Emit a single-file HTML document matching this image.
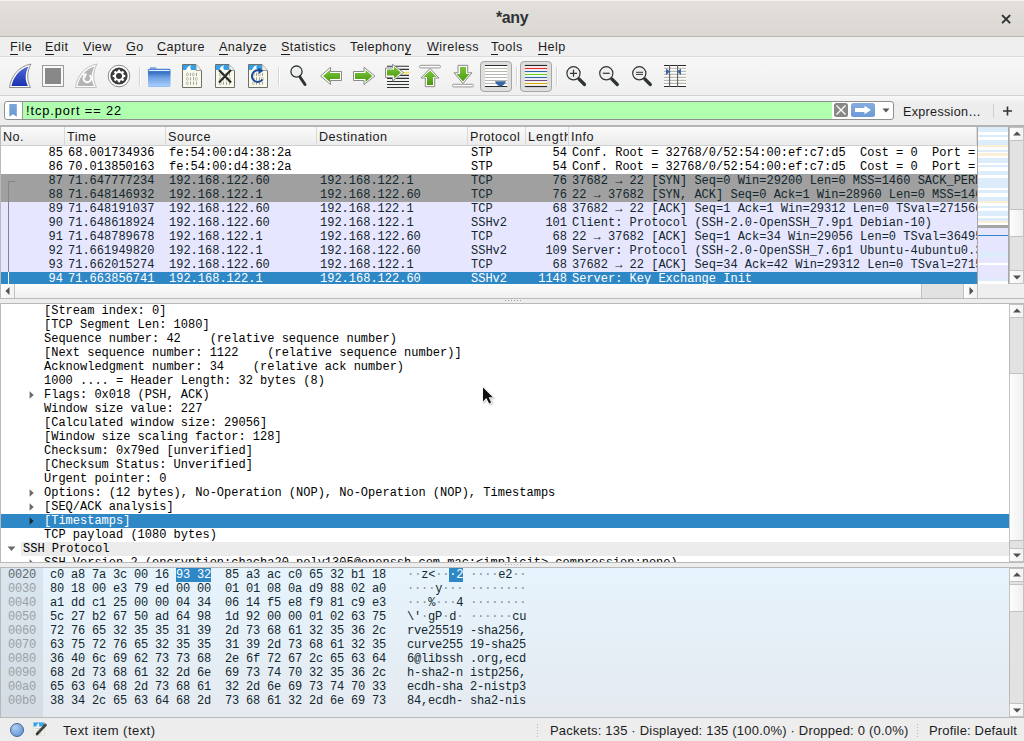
<!DOCTYPE html>
<html><head><meta charset="utf-8"><style>
*{box-sizing:border-box;margin:0;padding:0}
html,body{width:1024px;height:741px;overflow:hidden;background:#ededed;font-family:"Liberation Sans",sans-serif;color:#000}
.a{position:absolute}
.m{font-family:"Liberation Mono",monospace;font-size:12px;white-space:pre;line-height:14px}
#title{left:0;top:0;width:1024px;height:37px;background:linear-gradient(#e3e0dc,#dbd7d3);border-top:1px solid #f4f2f0;border-bottom:1px solid #bcb5ae}
#menu{left:0;top:37px;width:1024px;height:20px;background:#efefef;border-bottom:1px solid #dcdcdc}
#menu span{position:absolute;top:2px;font-size:12.6px;line-height:16px;color:#1c1c1c;letter-spacing:0.45px}
#menu u{text-decoration:none;border-bottom:1px solid #1c1c1c}
#tool{left:0;top:57px;width:1024px;height:39px;background:linear-gradient(#f7f7f7,#efefef);border-bottom:1px solid #d3d3d3}
#fbar{left:0;top:96px;width:1024px;height:29px;background:linear-gradient(#f8f8f8,#ededed 8px)}
#plist{left:0;top:125px;width:1024px;height:174px;background:#fff;border:1px solid #b9b9b9;border-top:2px solid #b4b4b4;border-right:0}
.hdr{position:absolute;top:0;height:19px;background:linear-gradient(#fafafa,#ececec);border-bottom:1px solid #cfcfcf;border-right:1px solid #d9d9d9;font-size:12.6px;line-height:18px;padding:1px 0 0 2px;color:#1a1a1a;letter-spacing:0.5px;overflow:hidden;white-space:nowrap}
.row{position:absolute;left:0;width:976px;height:14px;color:#12272e;overflow:hidden}
.row span{position:absolute;top:0}
.rw{background:#fff;color:#000}
.rg{background:#a0a0a0;color:#12272e}
.rl{background:#e7e6ff;color:#12272e}
.rs{background:#2f88c6;color:#fff}
#det{left:0;top:303px;width:1024px;height:260px;background:#fff;border:1px solid #b9b9b9;border-right:0;overflow:hidden}
.drow{position:absolute;left:0;width:1008px;height:14px;color:#000}
.dsel{background:#2f88c6;color:#fff}
#hex{left:0;top:567px;width:1024px;height:151px;background:linear-gradient(#e6f4fd,#e5eaf0);border:1px solid #b9b9b9;border-right:0;overflow:hidden}
.hrow{position:absolute;left:7px;height:14px;color:#12272e;letter-spacing:-0.2px}
.hrow .off{color:#9aa0a4}
.hrow .off0{color:#5c666b}
.hrow i{font-style:normal;color:#8a9296}
.hrow b{font-weight:normal;background:#2f88c6;color:#fff}
.hrow b i{color:#fff}
#status{left:0;top:718px;width:1024px;height:23px;background:#ededed}
.sbb{position:absolute;left:0;width:15px;height:14px;background:linear-gradient(90deg,#fdfdfd,#f2f2f2);border:1px solid #c2c2c2}
.thumb{position:absolute;background:linear-gradient(90deg,#fdfdfd,#efefef);border:1px solid #c2c2c2}
</style></head><body>

<div id="title" class="a">
  <div class="a" style="left:496px;top:8px;font-weight:bold;font-size:16px;line-height:18px;color:#2e3436;letter-spacing:-0.4px">*any</div>
  <svg class="a" style="left:1000px;top:12px" width="12" height="12"><path d="M2.6 2.6L9.6 9.6M9.6 2.6L2.6 9.6" stroke="#2e3436" stroke-width="2" stroke-linecap="round"/></svg>
</div>
<div id="menu" class="a">
  <span style="left:10px"><u>F</u>ile</span>
  <span style="left:45px"><u>E</u>dit</span>
  <span style="left:83px"><u>V</u>iew</span>
  <span style="left:126px"><u>G</u>o</span>
  <span style="left:157px"><u>C</u>apture</span>
  <span style="left:219px"><u>A</u>nalyze</span>
  <span style="left:281px"><u>S</u>tatistics</span>
  <span style="left:350px">Telephon<u>y</u></span>
  <span style="left:427px"><u>W</u>ireless</span>
  <span style="left:491px"><u>T</u>ools</span>
  <span style="left:538px"><u>H</u>elp</span>
</div>

<div id="tool" class="a">
<svg class="a" style="left:0;top:0" width="1024" height="39"><defs>
<linearGradient id="gfin" x1="0" y1="0" x2="0" y2="1"><stop offset="0" stop-color="#5068d8"/><stop offset="1" stop-color="#1a32b0"/></linearGradient>
<linearGradient id="gfold" x1="0" y1="0" x2="0" y2="1"><stop offset="0" stop-color="#4f86d4"/><stop offset="0.22" stop-color="#3a72c4"/><stop offset="0.45" stop-color="#6a9ee0"/><stop offset="0.92" stop-color="#a4cbfa"/><stop offset="1" stop-color="#8ab8f4"/></linearGradient>
<linearGradient id="ggr" x1="0" y1="0" x2="0" y2="1"><stop offset="0" stop-color="#7ac43a"/><stop offset="1" stop-color="#4a9a12"/></linearGradient>
</defs>
<g transform="translate(0,-57)">
<!-- capture start fin -->
<path d="M9.5 87.5C11 76 18.5 66.5 31 64C27 71 26.5 80 30.5 87.5Z" fill="#fff" stroke="#8e8e8e" stroke-width="1"/>
<path d="M11.5 86C13.5 77 19 69.5 28.5 66.5C25 73 24.8 80 28 86Z" fill="url(#gfin)"/>
<!-- stop -->
<rect x="42.5" y="65.5" width="21" height="21" fill="#fafafa" stroke="#9a9a9a" stroke-width="1"/>
<rect x="45" y="68" width="16" height="16" fill="#888"/>
<!-- restart fin -->
<path d="M75.5 87.5C77 76 84.5 66.5 97 64C93 71 92.5 80 96.5 87.5Z" fill="#fff" stroke="#c0c0c0" stroke-width="1"/>
<path d="M77.5 86C79.5 77 85 69.5 94.5 66.5C91 73 90.8 80 94 86Z" fill="#b4b4b4"/>
<path d="M84.2 76.2A3.8 3.8 0 1 0 89.5 75.2" fill="none" stroke="#fff" stroke-width="2"/><path d="M82 74L87 73.2L85.5 78Z" fill="#fff"/>
<!-- options gear -->
<circle cx="119" cy="76" r="10.8" fill="#fff" stroke="#8a8a8a" stroke-width="1"/>
<circle cx="119" cy="76" r="8.6" fill="#3a3a3a"/>
<g transform="translate(119 76)" fill="#fff">
<circle r="5"/>
<rect x="-1.1" y="-6.3" width="2.2" height="2.5" transform="rotate(0)"/><rect x="-1.1" y="-6.3" width="2.2" height="2.5" transform="rotate(45)"/><rect x="-1.1" y="-6.3" width="2.2" height="2.5" transform="rotate(90)"/><rect x="-1.1" y="-6.3" width="2.2" height="2.5" transform="rotate(135)"/><rect x="-1.1" y="-6.3" width="2.2" height="2.5" transform="rotate(180)"/><rect x="-1.1" y="-6.3" width="2.2" height="2.5" transform="rotate(225)"/><rect x="-1.1" y="-6.3" width="2.2" height="2.5" transform="rotate(270)"/><rect x="-1.1" y="-6.3" width="2.2" height="2.5" transform="rotate(315)"/>
</g>
<circle cx="119" cy="76" r="3" fill="#3a3a3a"/>
<!-- separator -->
<rect x="139" y="67" width="1" height="19" fill="#d4d4d4"/><rect x="140" y="67" width="1" height="19" fill="#fff"/>
<!-- folder -->
<path d="M150 67.3H155.5L157 68.8H150Z" fill="#6c9edf"/><path d="M148 70Q148 68.8 149.3 68.8H169.2Q170.5 68.8 170.5 70V85.8Q170.5 87 169.2 87H149.3Q148 87 148 85.8Z" fill="url(#gfold)"/>
<rect x="149" y="70" width="20.5" height="1" fill="#e8f2fc"/>
<g>
<path d="M182.5 64.5H196L201.5 70.5V87.5H182.5Z" fill="#fbfbec" stroke="#6e6e6a" stroke-width="1"/>
<path d="M183 65H195.7L200.7 70H183Z" fill="#34a0e8"/>
<path d="M186 70C187 67 189 65.5 191 65.2C190 66.8 190 68.5 191.5 70Z" fill="#fff"/>
<path d="M196 64.5V70.5H201.5" fill="#f0f0ea" stroke="#8a8a86" stroke-width="0.8"/>
<rect x="186.4" y="73.1" width="1.9" height="2.8" rx="0.9" fill="none" stroke="#a4a49c" stroke-width="0.7"/><rect x="190.0" y="72.8" width="0.9" height="3.2" fill="#9a9a92"/><rect x="192.4" y="73.1" width="1.9" height="2.8" rx="0.9" fill="none" stroke="#a4a49c" stroke-width="0.7"/><rect x="196.0" y="72.8" width="0.9" height="3.2" fill="#9a9a92"/><rect x="186.4" y="77.5" width="1.9" height="2.8" rx="0.9" fill="none" stroke="#a4a49c" stroke-width="0.7"/><rect x="190.0" y="77.2" width="0.9" height="3.2" fill="#9a9a92"/><rect x="193.0" y="77.2" width="0.9" height="3.2" fill="#9a9a92"/><rect x="195.4" y="77.5" width="1.9" height="2.8" rx="0.9" fill="none" stroke="#a4a49c" stroke-width="0.7"/><rect x="186.4" y="81.89999999999999" width="1.9" height="2.8" rx="0.9" fill="none" stroke="#a4a49c" stroke-width="0.7"/><rect x="190.0" y="81.6" width="0.9" height="3.2" fill="#9a9a92"/><rect x="193.0" y="81.6" width="0.9" height="3.2" fill="#9a9a92"/><rect x="196.0" y="81.6" width="0.9" height="3.2" fill="#9a9a92"/>

</g><g>
<path d="M215.5 64.5H229L234.5 70.5V87.5H215.5Z" fill="#fbfbec" stroke="#6e6e6a" stroke-width="1"/>
<path d="M216 65H228.7L233.7 70H216Z" fill="#34a0e8"/>
<path d="M219 70C220 67 222 65.5 224 65.2C223 66.8 223 68.5 224.5 70Z" fill="#fff"/>
<path d="M229 64.5V70.5H234.5" fill="#f0f0ea" stroke="#8a8a86" stroke-width="0.8"/>
<rect x="219.4" y="73.1" width="1.9" height="2.8" rx="0.9" fill="none" stroke="#a4a49c" stroke-width="0.7"/><rect x="223.0" y="72.8" width="0.9" height="3.2" fill="#9a9a92"/><rect x="225.4" y="73.1" width="1.9" height="2.8" rx="0.9" fill="none" stroke="#a4a49c" stroke-width="0.7"/><rect x="229.0" y="72.8" width="0.9" height="3.2" fill="#9a9a92"/><rect x="219.4" y="77.5" width="1.9" height="2.8" rx="0.9" fill="none" stroke="#a4a49c" stroke-width="0.7"/><rect x="223.0" y="77.2" width="0.9" height="3.2" fill="#9a9a92"/><rect x="226.0" y="77.2" width="0.9" height="3.2" fill="#9a9a92"/><rect x="228.4" y="77.5" width="1.9" height="2.8" rx="0.9" fill="none" stroke="#a4a49c" stroke-width="0.7"/><rect x="219.4" y="81.89999999999999" width="1.9" height="2.8" rx="0.9" fill="none" stroke="#a4a49c" stroke-width="0.7"/><rect x="223.0" y="81.6" width="0.9" height="3.2" fill="#9a9a92"/><rect x="226.0" y="81.6" width="0.9" height="3.2" fill="#9a9a92"/><rect x="229.0" y="81.6" width="0.9" height="3.2" fill="#9a9a92"/>
<path d="M219 70L231 82.5M231 70L219 82.5" stroke="#2a2a2a" stroke-width="2.2"/>
</g><g>
<path d="M248.5 64.5H262L267.5 70.5V87.5H248.5Z" fill="#fbfbec" stroke="#6e6e6a" stroke-width="1"/>
<path d="M249 65H261.7L266.7 70H249Z" fill="#34a0e8"/>
<path d="M252 70C253 67 255 65.5 257 65.2C256 66.8 256 68.5 257.5 70Z" fill="#fff"/>
<path d="M262 64.5V70.5H267.5" fill="#f0f0ea" stroke="#8a8a86" stroke-width="0.8"/>
<rect x="252.4" y="73.1" width="1.9" height="2.8" rx="0.9" fill="none" stroke="#a4a49c" stroke-width="0.7"/><rect x="256.0" y="72.8" width="0.9" height="3.2" fill="#9a9a92"/><rect x="258.4" y="73.1" width="1.9" height="2.8" rx="0.9" fill="none" stroke="#a4a49c" stroke-width="0.7"/><rect x="262.0" y="72.8" width="0.9" height="3.2" fill="#9a9a92"/><rect x="252.4" y="77.5" width="1.9" height="2.8" rx="0.9" fill="none" stroke="#a4a49c" stroke-width="0.7"/><rect x="256.0" y="77.2" width="0.9" height="3.2" fill="#9a9a92"/><rect x="259.0" y="77.2" width="0.9" height="3.2" fill="#9a9a92"/><rect x="261.4" y="77.5" width="1.9" height="2.8" rx="0.9" fill="none" stroke="#a4a49c" stroke-width="0.7"/><rect x="252.4" y="81.89999999999999" width="1.9" height="2.8" rx="0.9" fill="none" stroke="#a4a49c" stroke-width="0.7"/><rect x="256.0" y="81.6" width="0.9" height="3.2" fill="#9a9a92"/><rect x="259.0" y="81.6" width="0.9" height="3.2" fill="#9a9a92"/><rect x="262.0" y="81.6" width="0.9" height="3.2" fill="#9a9a92"/>
<path d="M262.5 79.5A5.8 5.8 0 1 1 260.5 71" fill="none" stroke="#1d4c9c" stroke-width="2"/><path d="M258.5 67.5L263.5 70.8L258.5 74Z" fill="#1d4c9c"/>
</g>
<rect x="278" y="67" width="1" height="19" fill="#d4d4d4"/><rect x="279" y="67" width="1" height="19" fill="#fff"/>
<!-- find -->
<circle cx="296.5" cy="71.6" r="5.6" fill="#eeeeec" stroke="#2e3436" stroke-width="1.3"/>
<path d="M293.5 69.5Q294.5 67.8 296.5 67.5" fill="none" stroke="#fff" stroke-width="1"/>
<path d="M300 77L305 84.5" stroke="#2e3436" stroke-width="3" stroke-linecap="round"/>
<!-- back arrow -->
<path d="M320.5 76L330.5 67.3V71.5H341.5V80.5H330.5V84.5Z" fill="#fff" stroke="#8a8a86" stroke-width="1" stroke-linejoin="round"/>
<path d="M323 76L330 70V73H340V79H330V82Z" fill="url(#ggr)"/>
<!-- forward arrow -->
<path d="M375 76L364 67.3V71.5H353.5V80.5H364V84.5Z" fill="#fff" stroke="#8a8a86" stroke-width="1" stroke-linejoin="round"/>
<path d="M372.5 76L365.5 70V73H355V79H365.5V82Z" fill="url(#ggr)"/>
<!-- go to packet -->
<g stroke="#2e3436" stroke-width="1.1">
<path d="M387 66.3H409M387 69.4H409M387 75.4H409M387 78.4H409M387 81.5H409M387 84.5H409M387 87.5H409"/>
</g>
<rect x="403" y="71.8" width="6" height="1.6" fill="#f8e040"/>
<path d="M403.5 72.5L392.5 64.3V68H385.5V77.5H392.5V81Z" fill="#fff" stroke="#8a8a86" stroke-width="1" stroke-linejoin="round"/>
<path d="M401 72.5L394 66.5V69.5H387V75.5H394V78.5Z" fill="url(#ggr)"/>
<!-- first packet -->
<rect x="419.5" y="65.3" width="21" height="2.6" rx="1.3" fill="#fff" stroke="#8a8a86" stroke-width="0.9"/>
<path d="M430 68.5L421 78H425.3V86.7H434.7V78H439Z" fill="#fff" stroke="#8a8a86" stroke-width="1" stroke-linejoin="round"/>
<path d="M430 70.5L423.5 77H427V85H433V77H436.5Z" fill="url(#ggr)"/>
<!-- last packet -->
<rect x="452.5" y="84.3" width="21" height="2.6" rx="1.3" fill="#fff" stroke="#8a8a86" stroke-width="0.9"/>
<path d="M463 83.5L454 72.8H458V65.3H467.7V72.8H472Z" fill="#fff" stroke="#8a8a86" stroke-width="1" stroke-linejoin="round"/>
<path d="M463 81.5L456.5 74H460V67H466V74H469.5Z" fill="url(#ggr)"/>
<!-- autoscroll toggled -->
<rect x="480.5" y="61.5" width="31" height="30" rx="3.5" fill="#dedede" stroke="#a6a6a6" stroke-width="1"/>
<rect x="485" y="65" width="22.3" height="22" fill="#fff"/>
<g stroke-width="1.2">
<path d="M485 65.5H507.3M485 86.5H507.3" stroke="#2a2a2a"/>
<path d="M485 68.5H507.3M485 71.5H507.3M485 74.5H507.3M485 77.5H507.3M485 80.5H507.3M485 83.5H507.3" stroke="#b8b8ae"/>
</g>
<path d="M495 81.2H506Q505 85 500.5 86.5Q496 85 495 81.2Z" fill="#3567a8"/>
<rect x="516" y="67" width="1" height="19" fill="#d4d4d4"/><rect x="517" y="67" width="1" height="19" fill="#fff"/>
<!-- colorize toggled -->
<rect x="520.5" y="61.5" width="31" height="30" rx="3.5" fill="#dedede" stroke="#a6a6a6" stroke-width="1"/>
<rect x="524.8" y="65" width="22.3" height="22" fill="#fff"/>
<g stroke-width="1.2">
<path d="M524.8 65.5H547.1" stroke="#2a2a2a"/>
<path d="M524.8 68.5H547.1" stroke="#e02828"/>
<path d="M524.8 71.5H547.1" stroke="#3465a4"/>
<path d="M524.8 74.5H547.1" stroke="#62d21e"/>
<path d="M524.8 77.5H547.1" stroke="#3465a4"/>
<path d="M524.8 80.5H547.1" stroke="#75507b"/>
<path d="M524.8 83.5H547.1" stroke="#d4a800"/>
<path d="M524.8 86.5H547.1" stroke="#2a2a2a"/>
</g>
<rect x="556" y="67" width="1" height="19" fill="#d4d4d4"/><rect x="557" y="67" width="1" height="19" fill="#fff"/>
<!-- zoom in -->
<circle cx="573.5" cy="73.3" r="6.6" fill="#eeeeec" stroke="#2e3436" stroke-width="1.2"/>
<path d="M570 73.3H577M573.5 69.8V76.8" stroke="#2e3436" stroke-width="1.2"/>
<path d="M579 79L584.5 84.5" stroke="#2e3436" stroke-width="3.2" stroke-linecap="round"/>
<!-- zoom out -->
<circle cx="606.3" cy="73.3" r="6.6" fill="#eeeeec" stroke="#2e3436" stroke-width="1.2"/>
<path d="M602.8 73.3H609.8" stroke="#2e3436" stroke-width="1.2"/>
<path d="M611.8 79L617.3 84.5" stroke="#2e3436" stroke-width="3.2" stroke-linecap="round"/>
<!-- zoom 100 -->
<circle cx="639.3" cy="73.3" r="6.6" fill="#eeeeec" stroke="#2e3436" stroke-width="1.2"/>
<path d="M636 72.3H643M636 74.4H643" stroke="#2e3436" stroke-width="1"/>
<path d="M644.8 79L650.3 84.5" stroke="#2e3436" stroke-width="3.2" stroke-linecap="round"/>
<!-- resize columns -->
<rect x="664" y="65" width="22" height="22" fill="#fff"/>
<g stroke-width="1.1">
<path d="M664 68.3H686M664 71.4H686M664 74.4H686M664 77.4H686M664 80.4H686M664 83.4H686" stroke="#b8b8ae"/>
<path d="M664 65.5H686M664 86.5H686" stroke="#2a2a2a" stroke-width="1.2"/>
<path d="M669.6 65V87M677.6 65V87" stroke="#606060"/>
</g>
<path d="M666 68.5L670 71.5L666 75Z" fill="#3567a8"/>
<path d="M681 68.5L677 71.5L681 75Z" fill="#3567a8"/>
</g></svg>
</div>

<div id="fbar" class="a">
  <div class="a" style="left:4px;top:5px;width:890px;height:19px;border:1px solid #8f8f8f;border-radius:3px;background:#fff;overflow:hidden">
    <svg class="a" style="left:3px;top:1px" width="10" height="15"><defs><linearGradient id="gbm" x1="0" y1="0" x2="0" y2="1"><stop offset="0" stop-color="#7aa6d8"/><stop offset="1" stop-color="#6a98d0"/></linearGradient></defs><path d="M1.3 1.5Q1.3 1 1.8 1H8.2Q8.8 1 8.8 1.5V13.8L5 11.3L1.3 13.8Z" fill="url(#gbm)"/></svg>
    <div class="a" style="left:17px;top:0;width:810px;height:17px;background:#afffaf;border-left:1px solid #9a9a9a"></div>
    <div class="a" style="left:21px;top:1px;font-size:12.8px;line-height:15px;color:#000;letter-spacing:0.9px">!tcp.port == 22</div>
    <div class="a" style="left:829px;top:1px;width:14px;height:14px;background:#888884;border-radius:2.5px"><svg class="a" style="left:0;top:0" width="14" height="14"><path d="M2.5 2.5L11.5 11.5M11.5 2.5L2.5 11.5" stroke="#fff" stroke-width="1.3"/></svg></div>
    <div class="a" style="left:846px;top:1px;width:24px;height:14px;background:linear-gradient(#86ace0,#6b9bd6);border-radius:2.5px"><svg class="a" style="left:0;top:0" width="24" height="14"><path d="M4 5H13.5V2.8L20 7L13.5 11.2V9H4Z" fill="#fff"/></svg></div>
    <svg class="a" style="left:877px;top:6px" width="8" height="5"><path d="M0.5 0.5H7.5L4 4.5Z" fill="#555"/></svg>
  </div>
  <div class="a" style="left:903px;top:8px;font-size:12.6px;line-height:16px;color:#1c1c1c;letter-spacing:0.3px">Expression…</div>
  <div class="a" style="left:993px;top:8px;width:1px;height:14px;background:#d0d0d0"></div>
  <svg class="a" style="left:1002px;top:10px" width="11" height="10"><path d="M5.5 0.5V9.5M1 5H10" stroke="#2e3436" stroke-width="1.6"/></svg>
</div>

<div id="plist" class="a">
<div class="hdr" style="left:0px;width:64px">No.</div>
<div class="hdr" style="left:64px;width:101px">Time</div>
<div class="hdr" style="left:165px;width:151px">Source</div>
<div class="hdr" style="left:316px;width:151px">Destination</div>
<div class="hdr" style="left:467px;width:58px">Protocol</div>
<div class="hdr" style="left:525px;width:43px"><span style="letter-spacing:0.9px">Length</span></div>
<div class="hdr" style="left:568px;width:408px">Info</div>
<div class="row m rw" style="top:19px"><span style="right:914px">85</span><span style="left:67px">68.001734936</span><span style="left:168px">fe:54:00:d4:38:2a</span><span style="left:319px"></span><span style="left:470px">STP</span><span style="right:410px">54</span><span style="left:571px">Conf. Root = 32768/0/52:54:00:ef:c7:d5  Cost = 0  Port = 0x8002</span></div>
<div class="row m rw" style="top:33px"><span style="right:914px">86</span><span style="left:67px">70.013850163</span><span style="left:168px">fe:54:00:d4:38:2a</span><span style="left:319px"></span><span style="left:470px">STP</span><span style="right:410px">54</span><span style="left:571px">Conf. Root = 32768/0/52:54:00:ef:c7:d5  Cost = 0  Port = 0x8002</span></div>
<div class="row m rg" style="top:47px"><span style="right:914px">87</span><span style="left:67px">71.647777234</span><span style="left:168px">192.168.122.60</span><span style="left:319px">192.168.122.1</span><span style="left:470px">TCP</span><span style="right:410px">76</span><span style="left:571px">37682 → 22 [SYN] Seq=0 Win=29200 Len=0 MSS=1460 SACK_PERM=1 TSval=2715</span></div>
<div class="row m rg" style="top:61px"><span style="right:914px">88</span><span style="left:67px">71.648146932</span><span style="left:168px">192.168.122.1</span><span style="left:319px">192.168.122.60</span><span style="left:470px">TCP</span><span style="right:410px">76</span><span style="left:571px">22 → 37682 [SYN, ACK] Seq=0 Ack=1 Win=28960 Len=0 MSS=1460 SACK_PERM</span></div>
<div class="row m rl" style="top:75px"><span style="right:914px">89</span><span style="left:67px">71.648191037</span><span style="left:168px">192.168.122.60</span><span style="left:319px">192.168.122.1</span><span style="left:470px">TCP</span><span style="right:410px">68</span><span style="left:571px">37682 → 22 [ACK] Seq=1 Ack=1 Win=29312 Len=0 TSval=2715600 TSecr</span></div>
<div class="row m rl" style="top:89px"><span style="right:914px">90</span><span style="left:67px">71.648618924</span><span style="left:168px">192.168.122.60</span><span style="left:319px">192.168.122.1</span><span style="left:470px">SSHv2</span><span style="right:410px">101</span><span style="left:571px">Client: Protocol (SSH-2.0-OpenSSH_7.9p1 Debian-10)</span></div>
<div class="row m rl" style="top:103px"><span style="right:914px">91</span><span style="left:67px">71.648789678</span><span style="left:168px">192.168.122.1</span><span style="left:319px">192.168.122.60</span><span style="left:470px">TCP</span><span style="right:410px">68</span><span style="left:571px">22 → 37682 [ACK] Seq=1 Ack=34 Win=29056 Len=0 TSval=3649500 TSecr</span></div>
<div class="row m rl" style="top:117px"><span style="right:914px">92</span><span style="left:67px">71.661949820</span><span style="left:168px">192.168.122.1</span><span style="left:319px">192.168.122.60</span><span style="left:470px">SSHv2</span><span style="right:410px">109</span><span style="left:571px">Server: Protocol (SSH-2.0-OpenSSH_7.6p1 Ubuntu-4ubuntu0.3)</span></div>
<div class="row m rl" style="top:131px"><span style="right:914px">93</span><span style="left:67px">71.662015274</span><span style="left:168px">192.168.122.60</span><span style="left:319px">192.168.122.1</span><span style="left:470px">TCP</span><span style="right:410px">68</span><span style="left:571px">37682 → 22 [ACK] Seq=34 Ack=42 Win=29312 Len=0 TSval=2715600 TSecr</span></div>
<div class="row m rs" style="top:145px"><span style="right:914px">94</span><span style="left:67px">71.663856741</span><span style="left:168px">192.168.122.1</span><span style="left:319px">192.168.122.60</span><span style="left:470px">SSHv2</span><span style="right:410px">1148</span><span style="left:571px">Server: Key Exchange Init</span></div>
<div class="a" style="left:7px;top:54px;width:7px;height:1px;background:#7b8a90"></div>
<div class="a" style="left:7px;top:54px;width:1px;height:103px;background:#7b8a90"></div>
<div class="a" style="left:7px;top:145px;width:1px;height:12px;background:#fff"></div>
<div class="a" style="left:976px;top:0;width:33px;height:157px;border-left:1px solid #a8a8a8;border-right:2px solid #a8a8a8;background:#fff"><div class="a" style="left:0;top:0;width:30px;height:157px;background:linear-gradient(#dcecfb 0px 5px,#ffffff 5px 8px,#dcecfb 8px 10px,#ffffff 10px 13px,#dcecfb 13px 18px,#fcefd8 18px 20px,#ffffff 20px 23px,#dcecfb 23px 25px,#ffffff 25px 26px,#fcefd8 26px 29px,#ffffff 29px 31px,#dcecfb 31px 36px,#ffffff 36px 38px,#dcecfb 38px 40px,#ffffff 40px 44px,#dcecfb 44px 48px,#ffffff 48px 51px,#dcecfb 51px 61px,#ffffff 61px 63px,#dcecfb 63px 66px,#ffffff 66px 70px,#dcecfb 70px 74px,#fcefd8 74px 76px,#ffffff 76px 79px,#dcecfb 79px 81px,#ffffff 81px 84px,#dcecfb 84px 89px,#ffffff 89px 91px,#dcecfb 91px 94px,#fcefd8 94px 96px,#ffffff 96px 98px,#a6a6a6 98px 101px,#e7e6ff 101px 108px,#2f88c6 108px 109px,#e7e6ff 109px 125px,#dcecfb 125px 130px,#e7e6ff 130px 136px,#ffffff 136px 138px,#e7e6ff 138px 152px,#dcecfb 152px 154px,#ffffff 154px 156px)"></div></div>
<div class="a" style="left:1008px;top:0px;width:15px;height:157px;background:#e2e2e2;border-left:1px solid #b8b8b8;border-right:1px solid #c8c8c8"><div class="sbb" style="left:-1px;top:0;height:14px"><svg class="a" style="left:3px;top:3px" width="8" height="5"><path d="M0 4.5L4 0.5L8 4.5Z" fill="#505050"/></svg></div><div class="thumb" style="left:-1px;top:82px;width:15px;height:28px"></div><div class="sbb" style="left:-1px;top:143px;height:14px"><svg class="a" style="left:3px;top:4px" width="8" height="5"><path d="M0 0.5L8 0.5L4 4.5Z" fill="#505050"/></svg></div></div>
<div class="a" style="left:0;top:157px;width:976px;height:14px;background:#e2e2e2"><div class="sbb" style="left:0;top:0;width:14px;height:14px;border:0;border-right:1px solid #c2c2c2"><svg class="a" style="left:4px;top:3px" width="5" height="8"><path d="M4.5 0L0.5 4L4.5 8Z" fill="#505050"/></svg></div><div class="thumb" style="left:14px;top:0;width:907px;height:14px;border:0;border-right:1px solid #c2c2c2;background:linear-gradient(#fdfdfd,#efefef)"></div><div class="sbb" style="left:962px;top:0;width:15px;height:14px;border:0;border-left:1px solid #c2c2c2;border-right:1px solid #c2c2c2"><svg class="a" style="left:5px;top:3px" width="5" height="8"><path d="M0.5 0L4.5 4L0.5 8Z" fill="#505050"/></svg></div></div>
<div class="a" style="left:977px;top:157px;width:47px;height:14px;background:#efefef"></div>
</div>

<div class="a" style="left:505px;top:300px;width:16px;height:1px;background-image:linear-gradient(90deg,#9a9a9a 1px,transparent 1px);background-size:3px 1px"></div>
<div class="a" style="left:505px;top:564px;width:16px;height:1px;background-image:linear-gradient(90deg,#b4b4b4 1px,transparent 1px);background-size:3px 1px"></div>

<div id="det" class="a">
<div class="drow m" style="top:0px"><span class="a" style="left:43px;top:0">[Stream index: 0]</span></div>
<div class="drow m" style="top:14px"><span class="a" style="left:43px;top:0">[TCP Segment Len: 1080]</span></div>
<div class="drow m" style="top:28px"><span class="a" style="left:43px;top:0">Sequence number: 42    (relative sequence number)</span></div>
<div class="drow m" style="top:42px"><span class="a" style="left:43px;top:0">[Next sequence number: 1122    (relative sequence number)]</span></div>
<div class="drow m" style="top:56px"><span class="a" style="left:43px;top:0">Acknowledgment number: 34    (relative ack number)</span></div>
<div class="drow m" style="top:70px"><span class="a" style="left:43px;top:0">1000 .... = Header Length: 32 bytes (8)</span></div>
<div class="drow m" style="top:84px"><svg class="a" style="left:28px;top:2px" width="8" height="10"><path d="M0.6 1.2L4.7 5L0.6 8.8Z" fill="#6a6a6a"/></svg><span class="a" style="left:43px;top:0">Flags: 0x018 (PSH, ACK)</span></div>
<div class="drow m" style="top:98px"><span class="a" style="left:43px;top:0">Window size value: 227</span></div>
<div class="drow m" style="top:112px"><span class="a" style="left:43px;top:0">[Calculated window size: 29056]</span></div>
<div class="drow m" style="top:126px"><span class="a" style="left:43px;top:0">[Window size scaling factor: 128]</span></div>
<div class="drow m" style="top:140px"><span class="a" style="left:43px;top:0">Checksum: 0x79ed [unverified]</span></div>
<div class="drow m" style="top:154px"><span class="a" style="left:43px;top:0">[Checksum Status: Unverified]</span></div>
<div class="drow m" style="top:168px"><span class="a" style="left:43px;top:0">Urgent pointer: 0</span></div>
<div class="drow m" style="top:182px"><svg class="a" style="left:28px;top:2px" width="8" height="10"><path d="M0.6 1.2L4.7 5L0.6 8.8Z" fill="#6a6a6a"/></svg><span class="a" style="left:43px;top:0">Options: (12 bytes), No-Operation (NOP), No-Operation (NOP), Timestamps</span></div>
<div class="drow m" style="top:196px"><svg class="a" style="left:28px;top:2px" width="8" height="10"><path d="M0.6 1.2L4.7 5L0.6 8.8Z" fill="#6a6a6a"/></svg><span class="a" style="left:43px;top:0">[SEQ/ACK analysis]</span></div>
<div class="drow m dsel" style="top:210px"><svg class="a" style="left:28px;top:2px" width="8" height="10"><path d="M0.6 1.2L4.7 5L0.6 8.8Z" fill="#1c2a30"/></svg><span class="a" style="left:43px;top:0">[Timestamps]</span></div>
<div class="drow m" style="top:224px"><span class="a" style="left:43px;top:0">TCP payload (1080 bytes)</span></div>
<div class="drow m" style="top:238px"><div class="a" style="left:20px;top:0;width:988px;height:14px;background:#ececec"></div><svg class="a" style="left:6px;top:3px" width="10" height="8"><path d="M0.5 1.5L8.5 1.5L4.5 6Z" fill="#6a6a6a"/></svg><span class="a" style="left:22px;top:0">SSH Protocol</span></div>
<div class="drow m" style="top:252px"><svg class="a" style="left:28px;top:2px" width="8" height="10"><path d="M0.6 1.2L4.7 5L0.6 8.8Z" fill="#6a6a6a"/></svg><span class="a" style="left:43px;top:0">SSH Version 2 (encryption:chacha20-poly1305@openssh.com mac:&lt;implicit&gt; compression:none)</span></div>
<div class="a" style="left:1008px;top:0px;width:15px;height:258px;background:#e2e2e2;border-left:1px solid #b8b8b8;border-right:1px solid #c8c8c8"><div class="sbb" style="left:-1px;top:0;height:14px"><svg class="a" style="left:3px;top:3px" width="8" height="5"><path d="M0 4.5L4 0.5L8 4.5Z" fill="#505050"/></svg></div><div class="thumb" style="left:-1px;top:69px;width:15px;height:168px"></div><div class="sbb" style="left:-1px;top:244px;height:14px"><svg class="a" style="left:3px;top:4px" width="8" height="5"><path d="M0 0.5L8 0.5L4 4.5Z" fill="#505050"/></svg></div></div>
</div>
<div id="hex" class="a">
<div class="a" style="left:0;top:0;width:42px;height:149px;background:linear-gradient(#d9e6ef,#d5dce3)"></div>
<div class="hrow m" style="top:0px"><span class="off0">0020</span>  c0 a8 7a 3c 00 16 <b>93 32</b>  85 a3 ac c0 65 32 b1 18   <i>·</i><i>·</i>z&lt;<i>·</i><i>·</i><b><i>·</i>2</b> <i>·</i><i>·</i><i>·</i><i>·</i>e2<i>·</i><i>·</i></div>
<div class="hrow m" style="top:14px"><span class="off">0030</span>  80 18 00 e3 79 ed 00 00  01 01 08 0a d9 88 02 a0   <i>·</i><i>·</i><i>·</i><i>·</i>y<i>·</i><i>·</i><i>·</i> <i>·</i><i>·</i><i>·</i><i>·</i><i>·</i><i>·</i><i>·</i><i>·</i></div>
<div class="hrow m" style="top:28px"><span class="off">0040</span>  a1 dd c1 25 00 00 04 34  06 14 f5 e8 f9 81 c9 e3   <i>·</i><i>·</i><i>·</i>%<i>·</i><i>·</i><i>·</i>4 <i>·</i><i>·</i><i>·</i><i>·</i><i>·</i><i>·</i><i>·</i><i>·</i></div>
<div class="hrow m" style="top:42px"><span class="off">0050</span>  5c 27 b2 67 50 ad 64 98  1d 92 00 00 01 02 63 75   \'<i>·</i>gP<i>·</i>d<i>·</i> <i>·</i><i>·</i><i>·</i><i>·</i><i>·</i><i>·</i>cu</div>
<div class="hrow m" style="top:56px"><span class="off">0060</span>  72 76 65 32 35 35 31 39  2d 73 68 61 32 35 36 2c   rve25519 -sha256,</div>
<div class="hrow m" style="top:70px"><span class="off">0070</span>  63 75 72 76 65 32 35 35  31 39 2d 73 68 61 32 35   curve255 19-sha25</div>
<div class="hrow m" style="top:84px"><span class="off">0080</span>  36 40 6c 69 62 73 73 68  2e 6f 72 67 2c 65 63 64   6@libssh .org,ecd</div>
<div class="hrow m" style="top:98px"><span class="off">0090</span>  68 2d 73 68 61 32 2d 6e  69 73 74 70 32 35 36 2c   h-sha2-n istp256,</div>
<div class="hrow m" style="top:112px"><span class="off">00a0</span>  65 63 64 68 2d 73 68 61  32 2d 6e 69 73 74 70 33   ecdh-sha 2-nistp3</div>
<div class="hrow m" style="top:126px"><span class="off">00b0</span>  38 34 2c 65 63 64 68 2d  73 68 61 32 2d 6e 69 73   84,ecdh- sha2-nis</div>
<div class="a" style="left:1008px;top:0px;width:15px;height:149px;background:#e2e2e2;border-left:1px solid #b8b8b8;border-right:1px solid #c8c8c8"><div class="sbb" style="left:-1px;top:0;height:14px"><svg class="a" style="left:3px;top:3px" width="8" height="5"><path d="M0 4.5L4 0.5L8 4.5Z" fill="#505050"/></svg></div><div class="thumb" style="left:-1px;top:16px;width:15px;height:28px"></div><div class="sbb" style="left:-1px;top:135px;height:14px"><svg class="a" style="left:3px;top:4px" width="8" height="5"><path d="M0 0.5L8 0.5L4 4.5Z" fill="#505050"/></svg></div></div>
</div>

<div id="status" class="a">
  <svg class="a" style="left:9px;top:4px" width="16" height="16"><defs><radialGradient id="gci" cx="0.35" cy="0.3" r="0.8"><stop offset="0" stop-color="#b0cdf2"/><stop offset="1" stop-color="#5f93d6"/></radialGradient></defs><circle cx="8" cy="8" r="6.5" fill="url(#gci)" stroke="#3c5a82" stroke-width="0.9"/></svg>
  <svg class="a" style="left:33px;top:4px" width="15" height="15">
    <rect x="0.5" y="0.5" width="11" height="13" fill="#f4f4ec" stroke="#d8d8d0" stroke-width="0.6"/>
    <rect x="0.5" y="0.5" width="11" height="4" fill="#3aa2e6"/>
    <path d="M3 4.5Q4.5 2 6 0.8Q5.6 3 6.5 4.5Z" fill="#fff"/>
    <path d="M2.5 6.5H9M2.5 9H9M2.5 11.5H9" stroke="#c8c8c0" stroke-width="0.8"/>
    <path d="M4 12L12.5 3" stroke="#444" stroke-width="2.6" stroke-linecap="round"/>
    <path d="M3.2 12.8L4.5 10.3L5.7 11.5Z" fill="#222"/>
  </svg>
  <div class="a" style="left:63px;top:5px;font-size:13px;line-height:16px;color:#1c1c1c;letter-spacing:0.45px">Text item (text)</div>
  <div class="a" style="left:537px;top:6px;width:1px;height:13px;background-image:linear-gradient(#b8b8b8 1px,transparent 1px);background-size:1px 3px"></div>
  <div class="a" style="left:550px;top:5px;font-size:13px;line-height:16px;color:#1c1c1c;white-space:pre;letter-spacing:0.2px">Packets: 135 · Displayed: 135 (100.0%) · Dropped: 0 (0.0%)</div>
  <div class="a" style="left:917px;top:6px;width:1px;height:13px;background-image:linear-gradient(#b8b8b8 1px,transparent 1px);background-size:1px 3px"></div>
  <div class="a" style="left:929px;top:5px;font-size:13px;line-height:16px;color:#1c1c1c;letter-spacing:0.17px">Profile: Default</div>
</div>

<svg class="a" style="left:478px;top:383px" width="20" height="24"><path d="M5.8 5.7V19.5L9.1 16.2L12 21.5L14.3 20.6L11.7 15.3H15.6Z" fill="none" stroke="#000" stroke-opacity="0.15" stroke-width="2.4" stroke-linejoin="round"/><path d="M5 4.6V18.4L8.3 15.1L11.2 20.4L13.1 19.6L10.7 14.2H14.8Z" fill="#111" stroke="#fff" stroke-width="1.2" stroke-linejoin="round" paint-order="stroke"/></svg>
</body></html>
